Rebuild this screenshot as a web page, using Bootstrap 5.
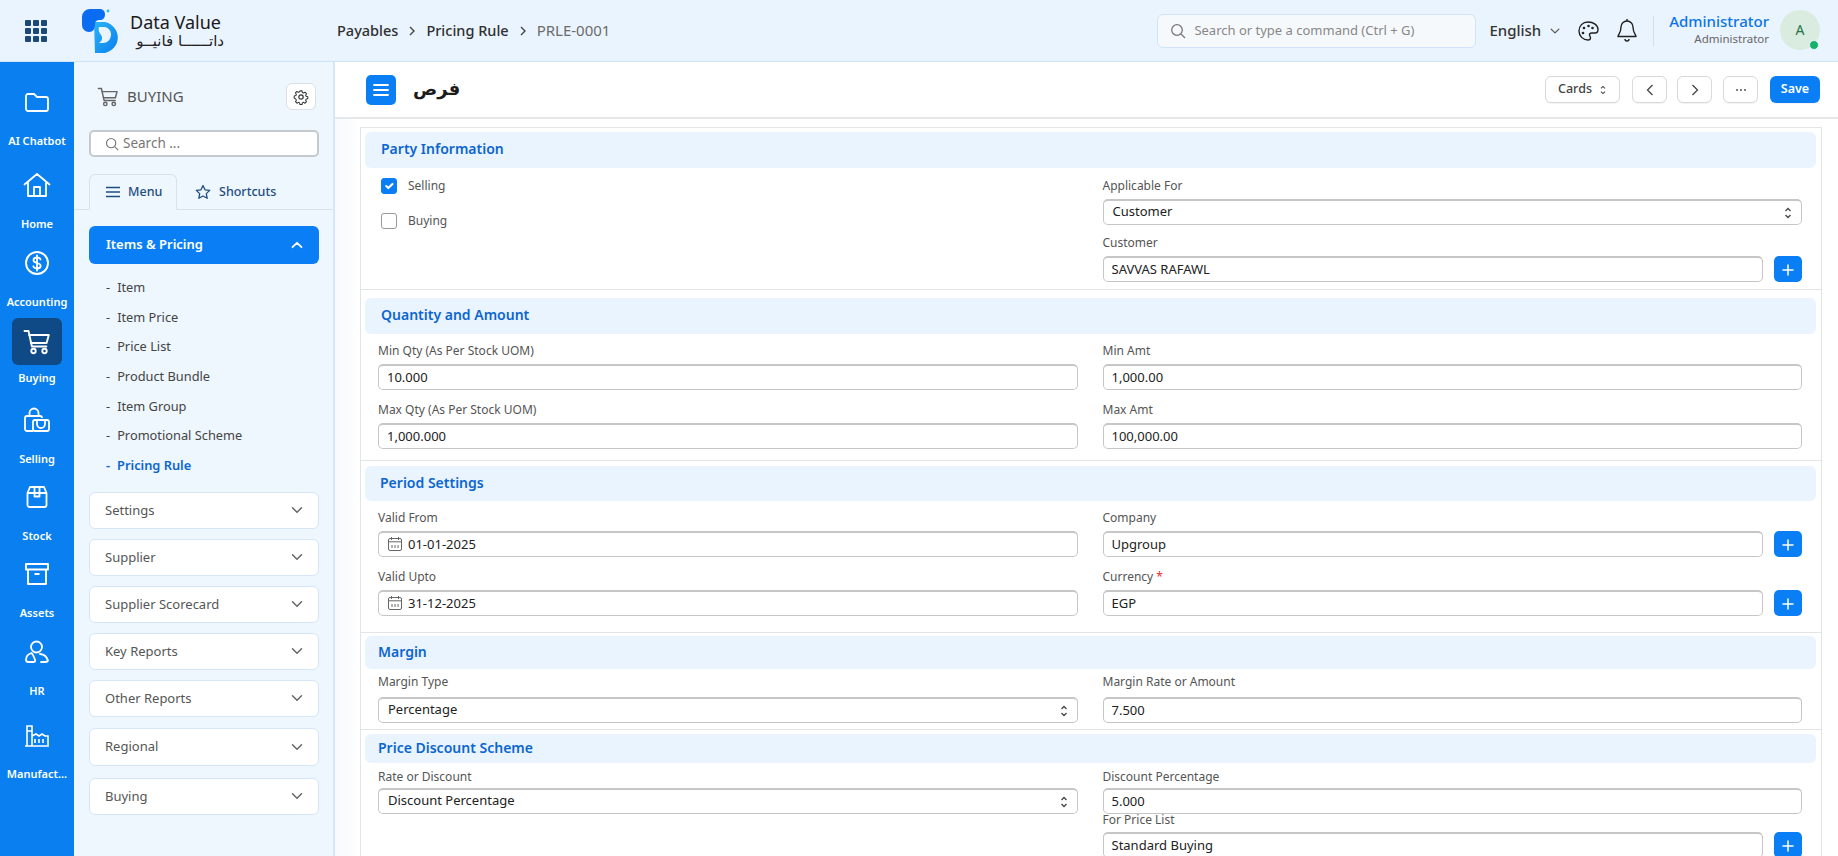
<!DOCTYPE html>
<html lang="en">
<head>
<meta charset="utf-8">
<title>Pricing Rule</title>
<link href="https://cdn.jsdelivr.net/npm/bootstrap@5.3.0/dist/css/bootstrap.min.css" rel="stylesheet">
<style>
html,body{height:100%;overflow:hidden}
body{font-family:"Noto Sans","Liberation Sans",sans-serif;font-size:13px;color:#333;background:#fff}
.shell{height:856px}
.topbar{height:62px;flex:none;background:#eaf4fe;border-bottom:1px solid #cfe3f9;flex-wrap:nowrap!important}
.tb-left{width:337px;flex:none}
.apps{display:grid;grid-template-columns:repeat(3,6px);gap:2px;margin:0 35px 0 25px}
.apps i{width:6px;height:6px;background:#1b4877;border-radius:1px;display:block}
.logo-words{margin-left:8px;line-height:1;width:94px}
.logo-en{font-size:18px;color:#1a1a1a;display:block}
.logo-ar{font-family:"DejaVu Sans",sans-serif;font-size:15px;color:#222;display:block;margin-top:3px;text-align:right;white-space:nowrap;line-height:15px}
.crumb{font-size:14.5px;color:#2f2f2f;font-weight:500}
.crumb-last{color:#6b6b6b;font-weight:400;font-size:15px}
.crumb-sep{margin:0 10px;color:#444}
.cmd{width:319px;height:34px;background:#f6f9fc;border:1px solid #cfe3f9;border-radius:6px;padding:0 12px;color:#888;font-size:13px;margin-right:13px;flex:none}
.lang{font-size:15px;color:#333;font-weight:500}
.vr-line{width:1px;height:30px;background:#d2dee9;margin:0 15px 0 14px}
.who{line-height:1.2;text-align:right;margin-right:11px;margin-bottom:3px}
.who b{display:block;font-weight:500;font-size:15px;color:#0a74e8}
.who span{display:block;font-size:11.5px;color:#666;margin-top:2px}
.ava{width:40px;height:40px;border-radius:50%;background:#d9ecdf;color:#23764a;font-size:14px;margin-right:18px;margin-bottom:2px;position:relative;flex:none}
.ava i{position:absolute;right:1px;bottom:0;width:10px;height:10px;border-radius:50%;background:#17b26a;border:1px solid #eaf4fe}
.rail{width:74px;flex:none;background:#0a7ff0;color:#fff;overflow:hidden}
.r-item{display:flex;flex-direction:column;align-items:center;font-size:11px;font-weight:600;height:52px;white-space:nowrap}
.r-ico{height:30px;display:flex;align-items:center;justify-content:center;flex:none}
.r-item span{line-height:14px;margin-top:17px}
.r-item:nth-child(1){margin-top:25px}
.r-item:nth-child(2){margin-top:31px}
.r-item:nth-child(3){margin-top:26px}
.r-item:nth-child(4){margin-top:24px}
.r-item:nth-child(5){margin-top:29px}
.r-item:nth-child(6){margin-top:25px}
.r-item:nth-child(7){margin-top:25px}
.r-item:nth-child(8){margin-top:26px}
.r-item:nth-child(9){margin-top:31px}
.r-on .r-ico{width:50px;height:47px;background:#0f4a86;border-radius:6px;margin-top:-6px;margin-bottom:-11px}
.side{width:261px;flex:none;background:#eef6fe;border-right:2px solid #d6e7f9;padding:0 14px 0 15px;position:relative}
.side-top{height:27px;margin:21px 0 20px;padding-left:8px;color:#555;font-size:15px}
.gear{width:30px;height:27px;background:#fff;border:1px solid #dcdfe3;border-radius:6px;padding:0;margin-left:auto;margin-right:3px}
.s-search{height:27px;width:230px;background:#fff;border:2px solid #c6c9cd;border-radius:5px;padding:0 14px;color:#777;font-size:13.5px;margin-top:6px;gap:4px}
.s-tabs{margin:17px -14px 0 -15px;padding-left:15px;height:36px;border-bottom:1px solid #d9e2ea;--bs-nav-tabs-border-color:#d9e2ea}
.s-tabs .nav-link{height:36px;padding:0 0 0 16px;font-size:12.5px;font-weight:500;color:#1f4d80;display:flex;align-items:center;gap:8px;border-radius:6px 6px 0 0}
.s-tabs .nav-link.active{width:88px;background:#eef6fe;color:#1f4d80;border-color:#d9e2ea #d9e2ea #eef6fe}
.s-tabs .nav-item+.nav-item .nav-link{padding-left:17px}
.acc-on{height:38px;width:230px;background:#0a7ff5;color:#fff;border-radius:6px;font-size:13px;font-weight:600;padding:0 15px 0 17px;margin-top:16px}
.subs{list-style:none;margin:9px 0 0;padding:0 0 0 17px;font-size:12.8px;color:#444}
.subs li{height:29.7px;line-height:29.7px}
.subs li::before{content:"-";margin-right:7px}
.subs .now{color:#0b66d0;font-weight:600}
.acc{height:37px;width:230px;background:#fff;border:1px solid #d5e6f8;border-radius:6px;color:#555;font-size:13px;font-weight:400;padding:0 14px 0 15px;margin-top:10px}
.acc-first{margin-top:11px}
.acc-r{margin-top:11px;height:38px}
.acc-b{margin-top:12px}
.work{background:linear-gradient(90deg,#f6f9fd,#fff 25px);min-width:0}
.bar{height:57px;flex:none;background:#fff;border-bottom:2px solid #e6e7e8;padding:0 18px 0 31px}
.menu-btn{width:30px;height:30px;background:#0a7ff5;border:0;border-radius:5px;padding:0;flex:none}
.title-ar{font-family:"DejaVu Sans",sans-serif;font-size:18px;font-weight:700;color:#1c1c1c;margin-left:17px;margin-bottom:3px}
.t-btn{height:27px;background:#fff;border:1px solid #d9d9d9;border-radius:6px;padding:0;color:#444;font-size:12.5px;font-weight:500;box-shadow:0 1px 1px #0000000d}
.t-sq{width:35px;margin-left:10px}
.t-more{margin-left:11px}
.t-cards{width:75px;margin-right:2px;gap:7px}
.t-save{width:50px;margin-left:12px;background:#0a7ff5;color:#fff;border:0;font-weight:600}
.sheet{flex:1;margin:8px 16px 0 25px;border-left:1px solid #e3e4e5;border-right:1px solid #e3e4e5;border-top:1px solid #e3e4e5;background:#fff;overflow:hidden}
.sec{border-bottom:1px solid #e3e4e5;padding:0 19px var(--pb) 17px}
.sec-head{margin:var(--hm) -14px 0 -13px;height:var(--hh);line-height:calc(var(--hh) - 2px);background:#eaf4fe;border-radius:6px;padding-left:var(--hp);color:#0b66d0;font-size:14px;font-weight:600}
.sec-a{--pb:7px;--hm:4px;--hh:36px;--hp:16px;--ft:10px;--fg:10px;--lg:5px}
.sec-b{--pb:11px;--hm:8px;--hh:36px;--hp:16px;--ft:9px;--fg:12px;--lg:5px}
.sec-c{--pb:16px;--hm:5px;--hh:35px;--hp:15px;--ft:9px;--fg:12px;--lg:5px}
.sec-d{--pb:6px;--hm:3px;--hh:33px;--hp:13px;--ft:5px;--fg:12px;--lg:7px}
.sec-e{--pb:6px;--hm:4px;--hh:29px;--hp:13px;--ft:6px;--fg:-2px;--lg:3px}
.pair{--bs-gutter-x:25px}
.fld{margin-top:var(--fg)}
.fld:first-child{margin-top:var(--ft)}
.fld label{display:block;font-size:12px;line-height:16px;color:#555;margin-bottom:var(--lg)}
.sec-e .fld+.fld label{margin-bottom:4px}
.inp{height:26px;border:1.5px solid #c6c6c6;border-top-width:2px;border-radius:5px;padding:0 8px 2px;font-size:13px;color:#222;background-color:#fff}
.sel{--bs-form-select-bg-img:url("data:image/svg+xml,%3csvg xmlns='http://www.w3.org/2000/svg' viewBox='0 0 10 14'%3e%3cpath fill='none' stroke='%23444' stroke-width='1.3' d='M2.5 5 5 2.5 7.5 5M2.5 9 5 11.5 7.5 9'/%3e%3c/svg%3e");background-size:10px 14px;background-position:right 8px center;padding:0 9px 2px}
.ico-in{position:relative}
.ico-in svg{position:absolute;left:9px;top:5px}
.ico-in .inp{padding-left:29px}
.add{width:28px;height:26px;flex:none;background:#0a7ff5;border:0;border-radius:5px;padding:0;margin-left:11px}
.chk{margin:0;padding:0;min-height:0;height:16px;display:flex;align-items:center;gap:11px;font-size:12px;color:#555;margin-left:3px}
.chk .form-check-input{float:none;margin:0;width:16px;height:16px;border:1.5px solid #999;border-radius:3px}
.chk .form-check-input:checked{background-color:#0a7ff5;border-color:#0a7ff5}
.chk+.chk{margin-top:19px}
.chks{padding-top:10px}
.req{color:#e03131}
</style>
</head>
<body>
<svg width="0" height="0" class="position-absolute">
<symbol id="dn" viewBox="0 0 14 14"><path d="M2.5 4.8 7 9.2l4.5-4.4" fill="none" stroke="currentColor" stroke-width="1.5" stroke-linecap="round" stroke-linejoin="round"/></symbol>
<symbol id="pl" viewBox="0 0 14 14"><path d="M7 2v10M2 7h10" fill="none" stroke="#fff" stroke-width="1.5" stroke-linecap="round"/></symbol>
<symbol id="cal" viewBox="0 0 16 16"><g fill="none" stroke="#666" stroke-width="1"><rect x="1.5" y="2.5" width="13" height="12" rx="1.5"/><path d="M1.5 5.8h13M4.500 1v3M11.500 1v3M5 9v3M8 9v3M11 9v3"/></g></symbol>
<symbol id="cart" viewBox="0 0 28 26"><g fill="none" stroke="currentColor" stroke-width="1.9" stroke-linecap="round" stroke-linejoin="round"><path d="M1.500 2h4l3.400 15.500h14.500"/><path d="M6.300 6h19.500l-2.200 8H8"/><circle cx="10.500" cy="22" r="2.200"/><circle cx="21.500" cy="22" r="2.200"/></g></symbol>
</svg>
<div class="shell d-flex flex-column">
<nav class="navbar topbar p-0">
  <div class="tb-left d-flex align-items-center">
    <div class="apps"><i></i><i></i><i></i><i></i><i></i><i></i><i></i><i></i><i></i></div>
    <svg width="40" height="44" viewBox="0 0 40 44">
      <defs><linearGradient id="lg" x1="0" y1="0" x2="1" y2="1"><stop offset="0" stop-color="#2bb4f5"/><stop offset="1" stop-color="#0a7ff0"/></linearGradient></defs>
      <path d="M12 13h11a17 16 0 0 1 0 31H13z" fill="url(#lg)"/>
      <path d="M8 0h10a5 5 0 0 1 5 5c0 4-2 6-5 6-3 0-5 1-5 4 0 5-2 8-6 8a7 7 0 0 1-7-7V8a8 8 0 0 1 8-8z" fill="#0a6cf0"/>
      <path d="M17 18h6a9 8 0 0 1 6 7c0 6-4 9-8 9h-4c3-2 4-5 2-8-2-3-3-5-2-8z" fill="#eaf4fe"/>
      <circle cx="26" cy="2" r="1.4" fill="#2bb4f5"/>
    </svg>
    <div class="logo-words"><span class="logo-en">Data Value</span><span class="logo-ar" dir="rtl">داتــــــا فانيــو</span></div>
  </div>
  <div class="d-flex align-items-center crumb">
    <span>Payables</span><svg class="crumb-sep" width="8" height="12" viewBox="0 0 8 12"><path d="m2 2 4 4-4 4" fill="none" stroke="currentColor" stroke-width="1.4"/></svg>
    <span>Pricing Rule</span><svg class="crumb-sep" width="8" height="12" viewBox="0 0 8 12"><path d="m2 2 4 4-4 4" fill="none" stroke="currentColor" stroke-width="1.4"/></svg>
    <span class="crumb-last">PRLE-0001</span>
  </div>
  <div class="d-flex align-items-center ms-auto">
    <div class="cmd d-flex align-items-center gap-2">
      <svg width="16" height="16" viewBox="0 0 16 16"><circle cx="7" cy="7" r="5.3" fill="none" stroke="#777" stroke-width="1.3"/><path d="m11 11 4 4" stroke="#777" stroke-width="1.3"/></svg>
      <span>Search or type a command (Ctrl + G)</span>
    </div>
    <span class="lang">English</span>
    <svg class="ms-2" width="12" height="12" style="color:#555"><use href="#dn"/></svg>
    <svg class="ms-3" width="22" height="24" viewBox="0 0 22 24"><path d="M11 3C5.500 3 2 7 2 12c0 5 4 9 9 9 1.800 0 2.500-1 2.500-2.200 0-1.300-1-1.600-1-2.800 0-1.200 1-2 2.200-2H18c2 0 3-1.500 3-3.500C21 6 16.500 3 11 3z" fill="none" stroke="#222" stroke-width="1.400"/><circle cx="7" cy="9" r="1.300" fill="#222"/><circle cx="11.500" cy="7" r="1.300" fill="#222"/><circle cx="15.500" cy="9" r="1.300" fill="#222"/><circle cx="6" cy="14" r="1.300" fill="#222"/></svg>
    <svg class="ms-3" width="24" height="26" viewBox="0 0 24 26"><path d="M12 3a6 6 0 0 0-6 6c0 6-3 8-3 9.500h18c0-1.500-3-3.500-3-9.500a6 6 0 0 0-6-6z" fill="none" stroke="#222" stroke-width="1.400" stroke-linejoin="round"/><path d="M12 1v2M10 21a2 2 0 0 0 4 0" fill="none" stroke="#222" stroke-width="1.400"/></svg>
    <div class="vr-line"></div>
    <div class="who"><b>Administrator</b><span>Administrator</span></div>
    <div class="ava d-flex align-items-center justify-content-center">A<i></i></div>
  </div>
</nav>
<div class="d-flex flex-grow-1 overflow-hidden">
  <aside class="rail">
    <div class="r-item"><div class="r-ico"><svg width="26" height="24" viewBox="0 0 26 24"><path d="M2 6a2 2 0 0 1 2-2h6l3 3h9a2 2 0 0 1 2 2v10a2 2 0 0 1-2 2H4a2 2 0 0 1-2-2z" fill="none" stroke="#fff" stroke-width="1.800" stroke-linejoin="round"/></svg></div><span>AI Chatbot</span></div>
    <div class="r-item"><div class="r-ico"><svg width="28" height="26" viewBox="0 0 28 26"><path d="M1.500 12.500 14 2l12.500 10.500M5 10v14h18V10M11 24v-9h6v9" fill="none" stroke="#fff" stroke-width="1.800" stroke-linejoin="round" stroke-linecap="round"/></svg></div><span>Home</span></div>
    <div class="r-item"><div class="r-ico"><svg width="26" height="26" viewBox="0 0 26 26"><circle cx="13" cy="13" r="11" fill="none" stroke="#fff" stroke-width="1.900"/><path d="M16.500 9.500c-.5-1.300-1.900-2-3.500-2-2 0-3.500 1-3.500 2.700 0 3.800 7.200 1.800 7.200 5.600 0 1.700-1.600 2.700-3.700 2.700-1.700 0-3.200-.8-3.700-2.200M13 5.500v15" fill="none" stroke="#fff" stroke-width="1.800" stroke-linecap="round"/></svg></div><span>Accounting</span></div>
    <div class="r-item r-on"><div class="r-ico"><svg width="28" height="26"><use href="#cart"/></svg></div><span>Buying</span></div>
    <div class="r-item"><div class="r-ico"><svg width="28" height="26" viewBox="0 0 28 26"><path d="M10 24H4a2 2 0 0 1-2-2V11a2 2 0 0 1 2-2h13a2 2 0 0 1 2 2M6.500 9V6a4.500 4.500 0 0 1 9 0v3" fill="none" stroke="#fff" stroke-width="1.800"/><rect x="10" y="13" width="16" height="11" rx="2" fill="none" stroke="#fff" stroke-width="1.800"/><path d="M14 14v3a4 4 0 0 0 8 0v-3" fill="none" stroke="#fff" stroke-width="1.800"/></svg></div><span>Selling</span></div>
    <div class="r-item"><div class="r-ico"><svg width="24" height="24" viewBox="0 0 24 24"><path d="M2.500 8 5 2h14l2.500 6v12a2 2 0 0 1-2 2h-15a2 2 0 0 1-2-2zM2.500 8h19M9.500 2v9.500h5V2" fill="none" stroke="#fff" stroke-width="1.800" stroke-linejoin="round"/></svg></div><span>Stock</span></div>
    <div class="r-item"><div class="r-ico"><svg width="26" height="24" viewBox="0 0 26 24"><path d="M2 2h22v5.500H2zM4 7.500V22h18V7.500M10.500 12h5" fill="none" stroke="#fff" stroke-width="1.900" stroke-linejoin="round"/></svg></div><span>Assets</span></div>
    <div class="r-item"><div class="r-ico"><svg width="26" height="24" viewBox="0 0 26 24"><circle cx="12.500" cy="7" r="5.500" fill="none" stroke="#fff" stroke-width="1.800"/><path d="M7.500 13C4 14 2 17 2 20c0 1.500 1 2 2.500 2H10c1 0 1.500-1 1-2-1-2-1-5-3.500-7zM16 14c4 .5 7 3 7.500 6M24 20c0 1.500-1 2-3 2h-4" fill="none" stroke="#fff" stroke-width="1.800" stroke-linecap="round"/></svg></div><span>HR</span></div>
    <div class="r-item"><div class="r-ico"><svg width="26" height="24" viewBox="0 0 26 24"><path d="M1 23h24M3 23V3h5v20M3 8h5M8 13l4-2 3 2 3-2 3 2h3v9M11 16v4M15 16v4M19 16v4" fill="none" stroke="#fff" stroke-width="1.600"/></svg></div><span>Manufact...</span></div>
  </aside>
  <aside class="side">
    <div class="side-top d-flex align-items-center">
      <svg width="22" height="20" class="me-2" style="color:#666"><use href="#cart"/></svg>
      <span>BUYING</span>
      <button class="btn gear d-flex align-items-center justify-content-center" type="button" aria-label="Settings"><svg width="16" height="16" viewBox="0 0 16 16"><path d="M6.800 1h2.400l.4 1.900 1.300.6 1.700-1 1.700 1.700-1 1.700.6 1.300 1.900.4v2.400l-1.900.4-.6 1.300 1 1.700-1.700 1.700-1.700-1-1.300.6-.4 1.900H6.800l-.4-1.900-1.300-.6-1.700 1-1.700-1.700 1-1.700-.6-1.300L.2 9.200V6.800l1.900-.4.6-1.300-1-1.700 1.700-1.700 1.700 1 1.300-.6z" fill="none" stroke="#333" stroke-width="1.200" stroke-linejoin="round" transform="translate(1 1) scale(.875)"/><circle cx="8" cy="8" r="2.200" fill="none" stroke="#333" stroke-width="1.200"/></svg></button>
    </div>
    <div class="s-search d-flex align-items-center"><svg width="14" height="14" viewBox="0 0 16 16"><circle cx="7" cy="7" r="5.300" fill="none" stroke="#777" stroke-width="1.300"/><path d="m11 11 4 4" stroke="#777" stroke-width="1.300"/></svg><span>Search ...</span></div>
    <ul class="nav nav-tabs s-tabs">
      <li class="nav-item"><a class="nav-link active" href="#"><svg width="14" height="12" viewBox="0 0 14 12"><path d="M0 1.500h14M0 6h14M0 10.500h14" stroke="#1f4d80" stroke-width="1.500"/></svg>Menu</a></li>
      <li class="nav-item"><a class="nav-link" href="#"><svg width="16" height="16" viewBox="0 0 16 16"><path d="m8 1.500 2 4.300 4.700.6-3.400 3.200.9 4.700L8 12l-4.200 2.300.9-4.700L1.300 6.400 6 5.800z" fill="none" stroke="#1f4d80" stroke-width="1.300" stroke-linejoin="round"/></svg>Shortcuts</a></li>
    </ul>
    <div class="acc-on d-flex align-items-center justify-content-between"><span>Items &amp; Pricing</span><svg width="14" height="14" viewBox="0 0 14 14"><path d="M2.500 9.200 7 4.800l4.500 4.400" fill="none" stroke="#fff" stroke-width="1.800" stroke-linecap="round" stroke-linejoin="round"/></svg></div>
    <ul class="subs">
      <li>Item</li><li>Item Price</li><li>Price List</li><li>Product Bundle</li><li>Item Group</li><li>Promotional Scheme</li><li class="now">Pricing Rule</li>
    </ul>
    <div class="acc acc-first d-flex align-items-center justify-content-between"><span>Settings</span><svg width="14" height="14" style="color:#666"><use href="#dn"/></svg></div>
    <div class="acc d-flex align-items-center justify-content-between"><span>Supplier</span><svg width="14" height="14" style="color:#666"><use href="#dn"/></svg></div>
    <div class="acc d-flex align-items-center justify-content-between"><span>Supplier Scorecard</span><svg width="14" height="14" style="color:#666"><use href="#dn"/></svg></div>
    <div class="acc d-flex align-items-center justify-content-between"><span>Key Reports</span><svg width="14" height="14" style="color:#666"><use href="#dn"/></svg></div>
    <div class="acc d-flex align-items-center justify-content-between"><span>Other Reports</span><svg width="14" height="14" style="color:#666"><use href="#dn"/></svg></div>
    <div class="acc acc-r d-flex align-items-center justify-content-between"><span>Regional</span><svg width="14" height="14" style="color:#666"><use href="#dn"/></svg></div>
    <div class="acc acc-b d-flex align-items-center justify-content-between"><span>Buying</span><svg width="14" height="14" style="color:#666"><use href="#dn"/></svg></div>
  </aside>
  <main class="work flex-grow-1 d-flex flex-column">
    <div class="bar d-flex align-items-center">
      <button class="menu-btn d-flex align-items-center justify-content-center" type="button" aria-label="Menu"><svg width="16" height="14" viewBox="0 0 16 14"><path d="M1 2h14M1 7h14M1 12h14" stroke="#fff" stroke-width="1.800" stroke-linecap="round"/></svg></button>
      <span class="title-ar" dir="rtl">فرص</span>
      <div class="d-flex align-items-center ms-auto">
        <button class="btn t-btn t-cards d-flex align-items-center justify-content-center" type="button">Cards<svg width="8" height="14" viewBox="0 0 10 14"><path fill="none" stroke="#444" stroke-width="1.300" d="M2.500 5 5 2.500 7.500 5M2.500 9 5 11.500 7.500 9"/></svg></button>
        <button class="btn t-btn t-sq d-flex align-items-center justify-content-center" type="button" aria-label="Previous"><svg width="8" height="14" viewBox="0 0 8 14"><path d="M6.500 2 1.500 7l5 5" fill="none" stroke="#444" stroke-width="1.300"/></svg></button>
        <button class="btn t-btn t-sq d-flex align-items-center justify-content-center" type="button" aria-label="Next"><svg width="8" height="14" viewBox="0 0 8 14"><path d="M1.500 2l5 5-5 5" fill="none" stroke="#444" stroke-width="1.300"/></svg></button>
        <button class="btn t-btn t-sq t-more d-flex align-items-center justify-content-center" type="button" aria-label="More"><svg width="12" height="4" viewBox="0 0 12 4"><circle cx="2" cy="2" r="1" fill="#555"/><circle cx="6" cy="2" r="1" fill="#555"/><circle cx="10" cy="2" r="1" fill="#555"/></svg></button>
        <button class="btn t-btn t-save" type="button">Save</button>
      </div>
    </div>
    <div class="sheet">
      <section class="sec sec-a">
        <div class="sec-head">Party Information</div>
        <div class="row pair">
          <div class="col-6"><div class="chks">
            <label class="form-check chk"><input class="form-check-input" type="checkbox" checked>Selling</label>
            <label class="form-check chk"><input class="form-check-input" type="checkbox">Buying</label>
          </div></div>
          <div class="col-6">
            <div class="fld"><label>Applicable For</label><select class="form-select inp sel"><option>Customer</option></select></div>
            <div class="fld"><label>Customer</label><div class="d-flex"><input class="form-control inp" value="SAVVAS RAFAWL"><button class="add" type="button" aria-label="Add"><svg width="14" height="14"><use href="#pl"/></svg></button></div></div>
          </div>
        </div>
      </section>
      <section class="sec sec-b">
        <div class="sec-head">Quantity and Amount</div>
        <div class="row pair">
          <div class="col-6">
            <div class="fld"><label>Min Qty (As Per Stock UOM)</label><input class="form-control inp" value="10.000"></div>
            <div class="fld"><label>Max Qty (As Per Stock UOM)</label><input class="form-control inp" value="1,000.000"></div>
          </div>
          <div class="col-6">
            <div class="fld"><label>Min Amt</label><input class="form-control inp" value="1,000.00"></div>
            <div class="fld"><label>Max Amt</label><input class="form-control inp" value="100,000.00"></div>
          </div>
        </div>
      </section>
      <section class="sec sec-c">
        <div class="sec-head">Period Settings</div>
        <div class="row pair">
          <div class="col-6">
            <div class="fld"><label>Valid From</label><div class="ico-in"><svg width="16" height="16"><use href="#cal"/></svg><input class="form-control inp" value="01-01-2025"></div></div>
            <div class="fld"><label>Valid Upto</label><div class="ico-in"><svg width="16" height="16"><use href="#cal"/></svg><input class="form-control inp" value="31-12-2025"></div></div>
          </div>
          <div class="col-6">
            <div class="fld"><label>Company</label><div class="d-flex"><input class="form-control inp" value="Upgroup"><button class="add" type="button" aria-label="Add"><svg width="14" height="14"><use href="#pl"/></svg></button></div></div>
            <div class="fld"><label>Currency <span class="req">*</span></label><div class="d-flex"><input class="form-control inp" value="EGP"><button class="add" type="button" aria-label="Add"><svg width="14" height="14"><use href="#pl"/></svg></button></div></div>
          </div>
        </div>
      </section>
      <section class="sec sec-d">
        <div class="sec-head">Margin</div>
        <div class="row pair">
          <div class="col-6"><div class="fld"><label>Margin Type</label><select class="form-select inp sel"><option>Percentage</option></select></div></div>
          <div class="col-6"><div class="fld"><label>Margin Rate or Amount</label><input class="form-control inp" value="7.500"></div></div>
        </div>
      </section>
      <section class="sec sec-e">
        <div class="sec-head">Price Discount Scheme</div>
        <div class="row pair">
          <div class="col-6"><div class="fld"><label>Rate or Discount</label><select class="form-select inp sel"><option>Discount Percentage</option></select></div></div>
          <div class="col-6">
            <div class="fld"><label>Discount Percentage</label><input class="form-control inp" value="5.000"></div>
            <div class="fld"><label>For Price List</label><div class="d-flex"><input class="form-control inp" value="Standard Buying"><button class="add" type="button" aria-label="Add"><svg width="14" height="14"><use href="#pl"/></svg></button></div></div>
          </div>
        </div>
      </section>
    </div>
  </main>
</div>
</div>
<script src="https://cdn.jsdelivr.net/npm/bootstrap@5.3.0/dist/js/bootstrap.bundle.min.js"></script>
</body>
</html>
